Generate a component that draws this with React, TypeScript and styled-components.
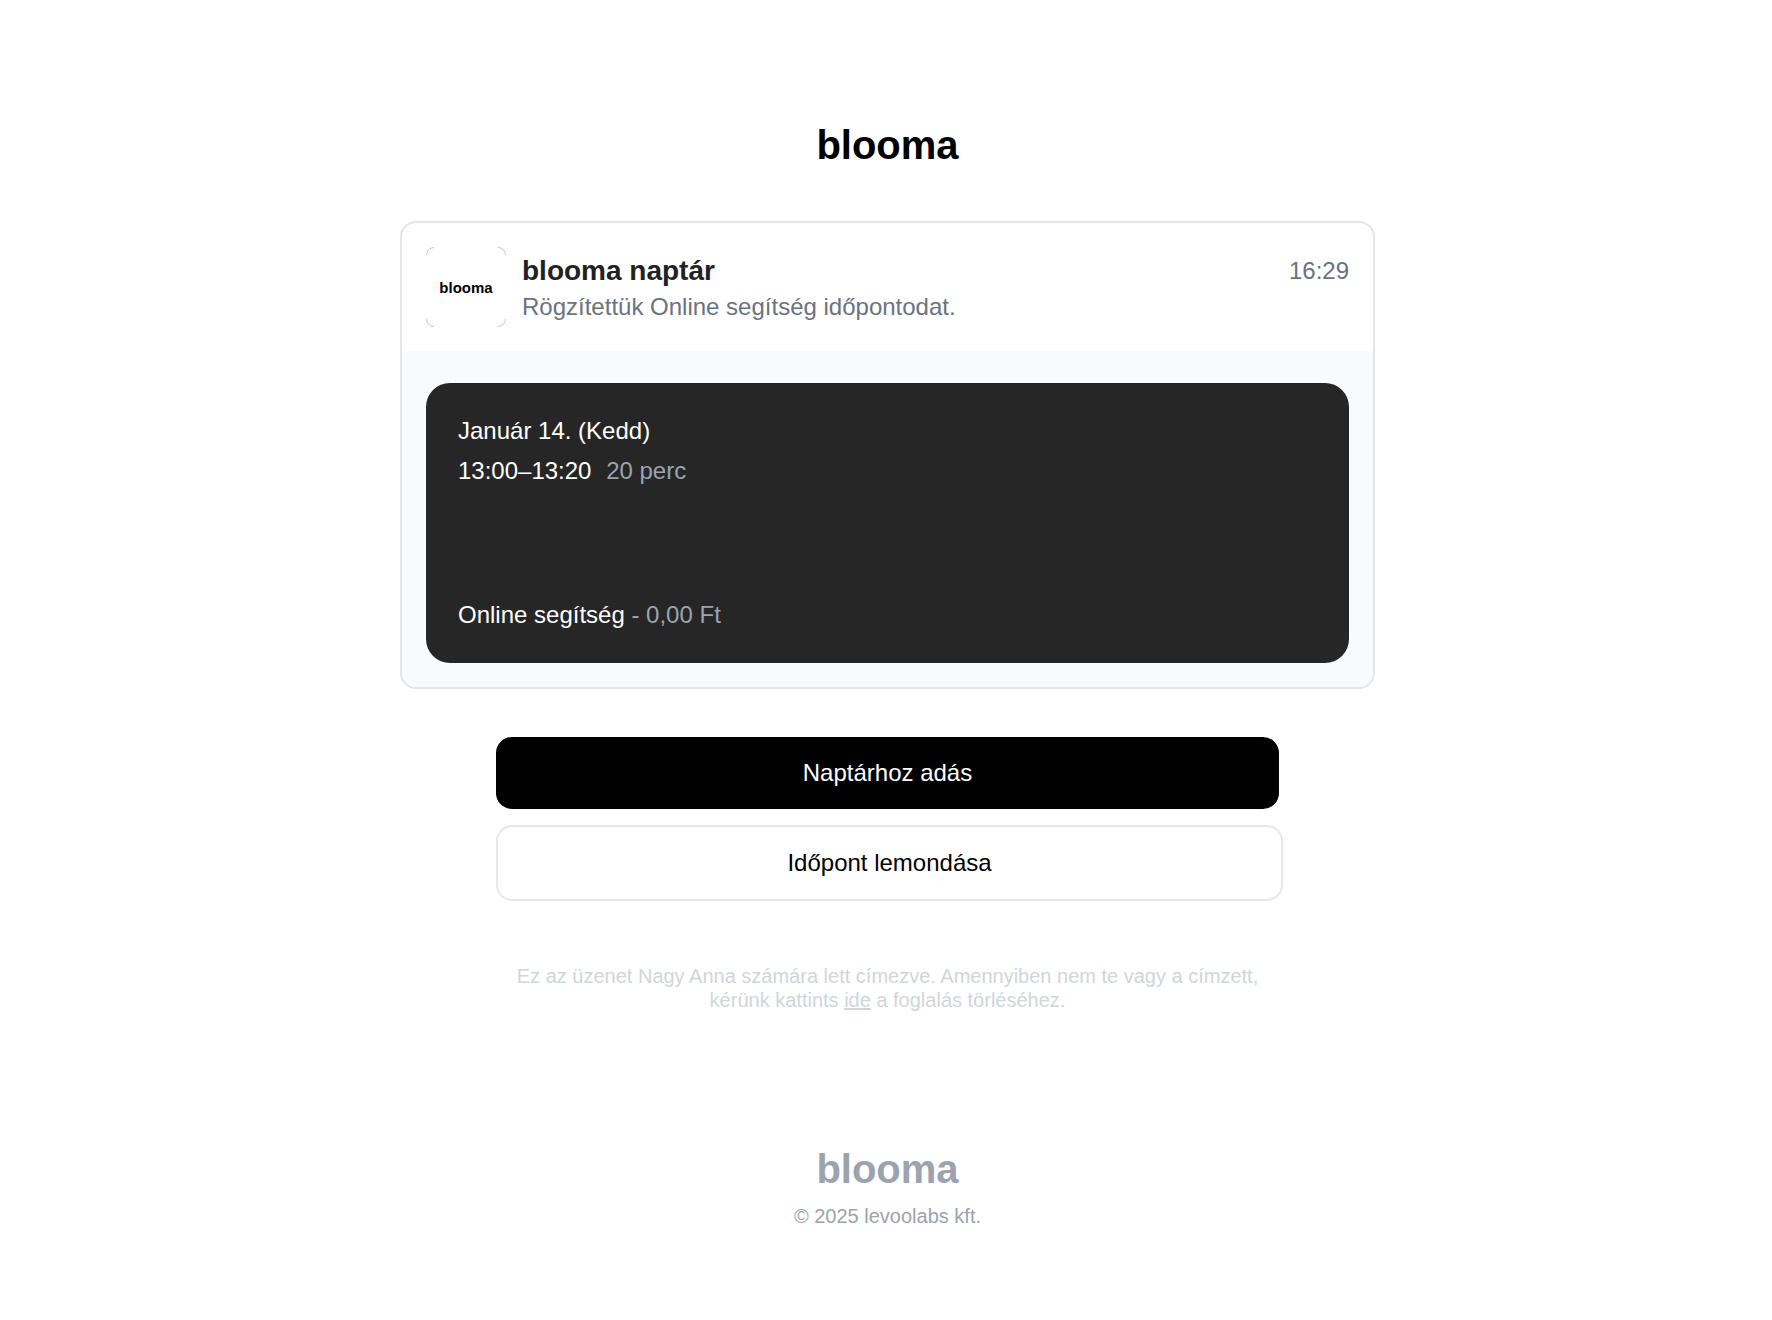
import React from "react";
import styled, { createGlobalStyle } from "styled-components";

const GlobalStyle = createGlobalStyle`
  body {
    margin: 0;
    background: #ffffff;
    color: #000000;
    font-family: "Liberation Sans", Arial, Helvetica, sans-serif;
    font-size: 24px;
    line-height: 28px;
  }
`;

const Page = styled.div`
  display: flex;
  flex-direction: column;
  align-items: center;
  padding: 121px 0 93px 3px;
`;

const Wordmark = styled.div<{ $muted?: boolean }>`
  color: ${(p) => (p.$muted ? "#9ca3af" : "#000000")};
  font-size: 40px;
  font-weight: 700;
  line-height: 48px;
`;

const Content = styled.main`
  width: 100%;
  max-width: 975px;
  margin-top: 52px;
`;

const Card = styled.section`
  border: 2px solid #e5e5e5;
  border-radius: 16px;
  overflow: hidden;
`;

const CardHeader = styled.header`
  display: flex;
  align-items: flex-start;
  gap: 16px;
  padding: 24px;
  line-height: 36px;
`;

const Avatar = styled.svg`
  flex: none;
  width: 80px;
  height: 80px;
`;

const Heading = styled.div`
  flex: 1;
  padding-top: 6px;
`;

const Title = styled.h1`
  margin: 0;
  color: #222222;
  font-size: 28px;
  font-weight: 700;
  line-height: 36px;
`;

const Subtitle = styled.p`
  margin: 0;
  color: #6b7280;
`;

const Time = styled.time`
  padding-top: 6px;
  color: #6b7280;
`;

const CardBody = styled.div`
  padding: 32px 24px 24px;
  background: #f9fafb;
`;

const Booking = styled.div`
  display: flex;
  flex-direction: column;
  justify-content: space-between;
  gap: 104px;
  padding: 28px 32px;
  border-radius: 24px;
  background: #262626;
  color: #ffffff;
  line-height: 40px;
`;

const Detail = styled.span<{ $spaced?: boolean }>`
  margin-left: ${(p) => (p.$spaced ? "8px" : "0")};
  color: #9ca3af;
`;

const Actions = styled.div`
  display: flex;
  flex-direction: column;
  align-items: flex-start;
  gap: 16px;
  margin: 48px 96px 0;
`;

const Action = styled.button<{ $outlined?: boolean }>`
  box-sizing: content-box;
  width: 100%;
  padding: 22px 0;
  border: ${(p) => (p.$outlined ? "2px solid #e5e7eb" : "none")};
  border-radius: 16px;
  background: ${(p) => (p.$outlined ? "#ffffff" : "#000000")};
  color: ${(p) => (p.$outlined ? "#000000" : "#ffffff")};
  font: inherit;
  cursor: pointer;
`;

const Notice = styled.p`
  margin: 63px 96px 0;
  color: #d1d5db;
  font-size: 20px;
  line-height: 24px;
  text-align: center;

  a {
    color: inherit;
  }
`;

const Footer = styled.footer`
  display: flex;
  flex-direction: column;
  align-items: center;
  gap: 11px;
  margin-top: 133px;
  color: #9ca3af;
  font-size: 20px;
  line-height: 24px;
`;

export default function App() {
  return (
    <>
      <GlobalStyle />
      <Page>
        <Wordmark>blooma</Wordmark>
        <Content>
          <Card>
            <CardHeader>
              <Avatar viewBox="0 0 80 80" aria-hidden="true">
                <path
                  d="M0.5 8A7.5 7.5 0 0 1 8 0.5M72 0.5A7.5 7.5 0 0 1 79.5 8M79.5 72A7.5 7.5 0 0 1 72 79.5M8 79.5A7.5 7.5 0 0 1 0.5 72"
                  fill="none"
                  stroke="#c4c4c4"
                />
                <text x="40" y="46" textAnchor="middle" fontSize="15" fontWeight="700">
                  blooma
                </text>
              </Avatar>
              <Heading>
                <Title>blooma naptár</Title>
                <Subtitle>Rögzítettük Online segítség időpontodat.</Subtitle>
              </Heading>
              <Time>16:29</Time>
            </CardHeader>
            <CardBody>
              <Booking>
                <div>
                  <div>Január 14. (Kedd)</div>
                  <div>
                    13:00–13:20 <Detail $spaced>20 perc</Detail>
                  </div>
                </div>
                <div>
                  Online segítség <Detail>- 0,00 Ft</Detail>
                </div>
              </Booking>
            </CardBody>
          </Card>
          <Actions>
            <Action type="button">Naptárhoz adás</Action>
            <Action type="button" $outlined>
              Időpont lemondása
            </Action>
          </Actions>
          <Notice>
            Ez az üzenet Nagy Anna számára lett címezve. Amennyiben nem te vagy a címzett, kérünk
            kattints <a href="#cancel">ide</a> a foglalás törléséhez.
          </Notice>
        </Content>
        <Footer>
          <Wordmark $muted>blooma</Wordmark>
          <div>© 2025 levoolabs kft.</div>
        </Footer>
      </Page>
    </>
  );
}
